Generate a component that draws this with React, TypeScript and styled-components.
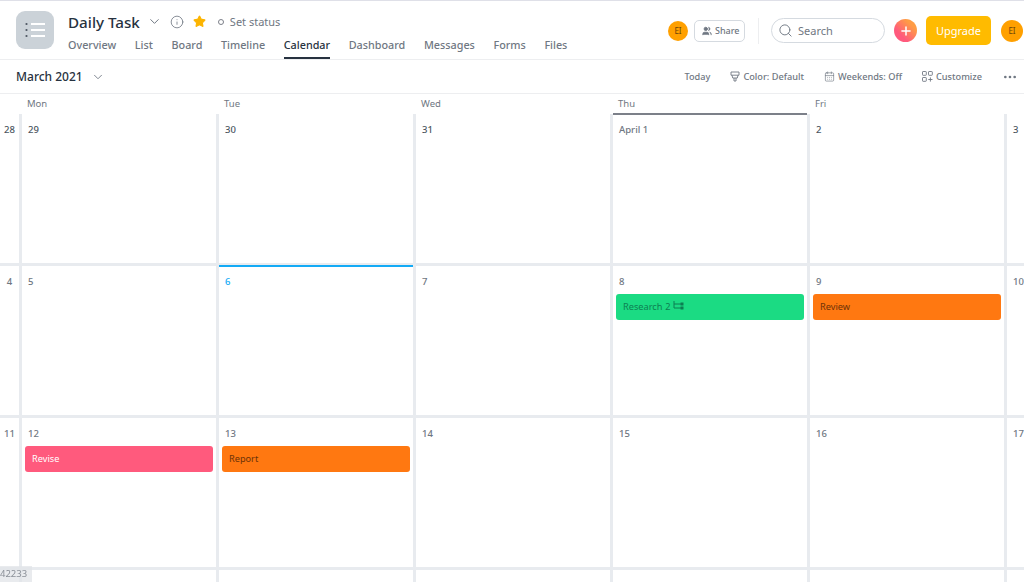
import type { FC } from "react";
import styled, { createGlobalStyle } from "styled-components";
import { CalendarDays, ChevronDown, Info, MoreHorizontal, Plus, Search, Star, Users } from "lucide-react";

type Tone = "green" | "orange" | "pink";

interface CellData {
  label: string;
  isToday?: boolean;
  isMarked?: boolean;
  muted?: boolean;
  task?: { name: string; tone: Tone; subtasks?: number };
}

const tabs = ["Overview", "List", "Board", "Timeline", "Calendar", "Dashboard", "Messages", "Forms", "Files"];
const weekdays = ["Mon", "Tue", "Wed", "Thu", "Fri"];

const weeks: CellData[][] = [
  [
    { label: "28" },
    { label: "29" },
    { label: "30" },
    { label: "31" },
    { label: "April 1", isMarked: true, muted: true },
    { label: "2" },
    { label: "3" },
  ],
  [
    { label: "4", muted: true },
    { label: "5", muted: true },
    { label: "6", isToday: true },
    { label: "7", muted: true },
    { label: "8", muted: true, task: { name: "Research", tone: "green", subtasks: 2 } },
    { label: "9", muted: true, task: { name: "Review", tone: "orange" } },
    { label: "10", muted: true },
  ],
  [
    { label: "11", muted: true },
    { label: "12", muted: true, task: { name: "Revise", tone: "pink" } },
    { label: "13", muted: true, task: { name: "Report", tone: "orange" } },
    { label: "14", muted: true },
    { label: "15", muted: true },
    { label: "16", muted: true },
    { label: "17", muted: true },
  ],
  [
    { label: "18", muted: true },
    { label: "19", muted: true },
    { label: "20", muted: true },
    { label: "21", muted: true },
    { label: "22", muted: true },
    { label: "23", muted: true },
    { label: "24", muted: true },
  ],
];

const toneColors: Record<Tone, { bg: string; fg: string }> = {
  green: { bg: "#1bdb83", fg: "#0d7f52" },
  orange: { bg: "#ff7811", fg: "#6d3208" },
  pink: { bg: "#ff5a7d", fg: "#ffffff" },
};

const App: FC = () => (
  <Page>
    <GlobalStyle />
    <Header>
      <LogoTile>
        <svg width="20" height="16" viewBox="0 0 20 16" fill="none">
          <circle cx="1.5" cy="2" r="1.1" fill="#4c5560" />
          <circle cx="1.5" cy="8" r="1.1" fill="#4c5560" />
          <circle cx="1.5" cy="14" r="1.1" fill="#4c5560" />
          <path d="M6 2h14M6 8h14M6 14h14" stroke="#fff" strokeWidth="2" />
        </svg>
      </LogoTile>
      <TitleBlock>
        <TitleRow>
          <Title>Daily Task</Title>
          <ChevronDown size={15} color="#6f7782" strokeWidth={1.6} />
          <Info size={14} color="#6f7782" strokeWidth={1.4} />
          <Star size={13} color="#fcb400" fill="#fcb400" />
          <StatusDot />
          <StatusText>Set status</StatusText>
        </TitleRow>
        <Tabs>
          {tabs.map((tab) => (
            <Tab key={tab} $active={tab === "Calendar"}>
              {tab}
            </Tab>
          ))}
        </Tabs>
      </TitleBlock>
      <HeaderRight>
        <Avatar $size={20}>EI</Avatar>
        <ShareButton>
          <Users size={10} color="#6f7782" fill="#6f7782" />
          Share
        </ShareButton>
        <VDivider />
        <SearchBox>
          <Search size={15} color="#6f7782" strokeWidth={1.5} />
          <span>Search</span>
        </SearchBox>
        <AddButton>
          <Plus size={14} color="#fff" strokeWidth={2.6} />
        </AddButton>
        <UpgradeButton>Upgrade</UpgradeButton>
        <Avatar $size={22}>EI</Avatar>
      </HeaderRight>
    </Header>

    <Toolbar>
      <MonthLabel>March 2021</MonthLabel>
      <ChevronDown size={14} color="#6f7782" strokeWidth={1.5} />
      <ToolbarRight>
        <ToolItem>Today</ToolItem>
        <ToolItem>
          <svg width="10" height="11" viewBox="0 0 10 11" fill="none" stroke="#6f7782" strokeWidth="0.9">
            <path d="M1 1h8v3.2H1zM2 4.2l.7 2.8h4.6L8 4.2M4 7v3h2V7" />
          </svg>
          Color: Default
        </ToolItem>
        <ToolItem>
          <CalendarDays size={11} color="#6f7782" strokeWidth={1.4} />
          Weekends: Off
        </ToolItem>
        <ToolItem>
          <svg width="11" height="11" viewBox="0 0 11 11" fill="none" stroke="#6f7782" strokeWidth="0.9">
            <rect x="0.5" y="0.5" width="3.8" height="3.8" rx="0.6" />
            <rect x="6.5" y="0.5" width="3.8" height="3.8" rx="0.6" />
            <rect x="0.5" y="6.5" width="3.8" height="3.8" rx="0.6" />
            <path d="M8.4 6.4v4.2M6.3 8.5h4.2" />
          </svg>
          Customize
        </ToolItem>
        <MoreHorizontal size={16} color="#6f7782" />
      </ToolbarRight>
    </Toolbar>

    <WeekdayRow>
      {weekdays.map((day) => (
        <Weekday key={day}>{day}</Weekday>
      ))}
    </WeekdayRow>

    <Grid>
      {weeks.map((week) =>
        week.map((cell) => (
          <Cell key={cell.label}>
            {cell.isMarked && <TopBar $color="#7c8089" />}
            {cell.isToday && <TopBar $color="#14aaf5" />}
            <DateLabel $today={cell.isToday} $muted={cell.muted}>
              {cell.label}
            </DateLabel>
            {cell.task && (
              <TaskCard $tone={cell.task.tone}>
                {cell.task.name}
                {cell.task.subtasks && (
                  <>
                    <span> {cell.task.subtasks}</span>
                    <svg width="11" height="10" viewBox="0 0 11 10" fill="none" stroke="currentColor" strokeWidth="1">
                      <path d="M1 0v7h7M1 3h7" />
                      <rect x="8" y="2" width="2" height="2" fill="currentColor" />
                      <rect x="8" y="6" width="2" height="2" fill="currentColor" />
                    </svg>
                  </>
                )}
              </TaskCard>
            )}
          </Cell>
        ))
      )}
    </Grid>

    <FrameCounter>42233</FrameCounter>
  </Page>
);

export default App;

const GlobalStyle = createGlobalStyle`
  html, body {
    margin: 0;
    height: 100%;
    background: #fff;
    overflow: hidden;
  }
  * {
    box-sizing: border-box;
  }
`;

const Page = styled.div`
  width: 1024px;
  height: 582px;
  overflow: hidden;
  font-family: "Noto Sans", "Open Sans", sans-serif;
  color: #6f7782;
  background: #fff;
  border-top: 1px solid #dfe0e8;
`;

const Header = styled.header`
  display: flex;
  height: 59px;
  padding-left: 16px;
  border-bottom: 1px solid #edeef0;
`;

const LogoTile = styled.div`
  display: flex;
  align-items: center;
  justify-content: center;
  width: 38px;
  height: 38px;
  margin-top: 10px;
  border-radius: 9px;
  background: #cbd2d8;
`;

const TitleBlock = styled.div`
  display: flex;
  flex-direction: column;
  margin-left: 14px;
`;

const TitleRow = styled.div`
  display: flex;
  align-items: center;
  height: 24px;
  margin-top: 9px;

  svg:nth-of-type(1) {
    margin-left: 7px;
  }
  svg:nth-of-type(2) {
    margin-left: 8px;
  }
  svg:nth-of-type(3) {
    margin-left: 9px;
  }
`;

const Title = styled.h1`
  margin: 0;
  font-size: 15.2px;
  font-weight: 500;
  color: #273240;
`;

const StatusDot = styled.span`
  width: 6px;
  height: 6px;
  margin-left: 12px;
  border: 1px solid #7c8089;
  border-radius: 50%;
`;

const StatusText = styled.span`
  margin-left: 6px;
  font-size: 11px;
`;

const Tabs = styled.nav`
  display: flex;
  gap: 18.6px;
  height: 26px;
`;

const Tab = styled.span<{ $active: boolean }>`
  display: flex;
  align-items: center;
  height: 25px;
  padding-bottom: 1px;
  font-size: 10.8px;
  font-weight: 500;
  color: ${({ $active }) => ($active ? "#273240" : "#6f7782")};
  border-bottom: 2px solid ${({ $active }) => ($active ? "#273240" : "transparent")};
`;

const HeaderRight = styled.div`
  display: flex;
  align-items: center;
  margin-left: auto;
  padding-top: 1px;
  padding-right: 1px;
`;

const Avatar = styled.div<{ $size: number }>`
  display: flex;
  align-items: center;
  justify-content: center;
  width: ${({ $size }) => $size}px;
  height: ${({ $size }) => $size}px;
  border-radius: 50%;
  background: #ffa000;
  color: #6d4308;
  font-size: 8px;
`;

const ShareButton = styled.button`
  display: flex;
  align-items: center;
  gap: 3px;
  width: 51px;
  height: 22px;
  margin-left: 6px;
  padding: 0 0 0 7px;
  border: 1px solid #d5dae0;
  border-radius: 5px;
  background: #fff;
  color: #6f7782;
  font: 500 9px "Noto Sans", sans-serif;
`;

const VDivider = styled.div`
  width: 1px;
  height: 26px;
  margin: 0 12px 0 13px;
  background: #edeef0;
`;

const SearchBox = styled.div`
  display: flex;
  align-items: center;
  gap: 5px;
  width: 114px;
  height: 25px;
  padding-left: 6px;
  border: 1px solid #d5dae0;
  border-radius: 13px;
  font-size: 11px;
`;

const AddButton = styled.div`
  display: flex;
  align-items: center;
  justify-content: center;
  width: 23px;
  height: 23px;
  margin-left: 9px;
  border-radius: 50%;
  background: linear-gradient(45deg, #ff5a7d 30%, #ff9c45 75%);
`;

const UpgradeButton = styled.button`
  width: 65px;
  height: 29px;
  margin: 0 10px 0 9px;
  border: 0;
  border-radius: 5px;
  background: #ffbb00;
  color: #fff;
  font: 400 11px "Noto Sans", sans-serif;
`;

const Toolbar = styled.div`
  display: flex;
  align-items: center;
  gap: 8px;
  height: 34px;
  padding: 0 6px 0 16px;
  border-bottom: 1px solid #edeef0;
`;

const MonthLabel = styled.span`
  font-size: 12px;
  font-weight: 500;
  color: #273240;
`;

const ToolbarRight = styled.div`
  display: flex;
  align-items: center;
  gap: 20px;
  margin-left: auto;
`;

const ToolItem = styled.span`
  display: flex;
  align-items: center;
  gap: 3px;
  font-size: 9.2px;
  font-weight: 500;
`;

const WeekdayRow = styled.div`
  display: grid;
  grid-template-columns: 22px repeat(5, 197px);
  height: 20px;

  &::before {
    content: "";
  }
`;

const Weekday = styled.span`
  padding-left: 5px;
  font-size: 9.5px;
  line-height: 19px;
`;

const Grid = styled.div`
  display: grid;
  grid-template-columns: 22px repeat(5, 197px) 17px;
  grid-auto-rows: 152px;
`;

const Cell = styled.div`
  position: relative;
  min-width: 0;
  padding: 9px 3px 0;
  border-right: 3px solid #e8ebef;
  border-bottom: 3px solid #e8ebef;

  &:nth-child(7n + 1) {
    padding: 9px 0 0;
    text-align: center;
  }
  &:nth-child(7n) {
    border-right: 0;
  }
`;

const TopBar = styled.span<{ $color: string }>`
  position: absolute;
  top: -1px;
  left: 0;
  right: 0;
  height: 2px;
  background: ${({ $color }) => $color};
`;

const DateLabel = styled.div<{ $today?: boolean; $muted?: boolean }>`
  height: 14px;
  padding: 0 3px;
  font-size: 9.5px;
  font-weight: 500;
  line-height: 14px;
  color: ${({ $today, $muted }) => ($today ? "#14aaf5" : $muted ? "#6f7782" : "#4b5560")};
`;

const TaskCard = styled.div<{ $tone: Tone }>`
  display: flex;
  align-items: center;
  gap: 3px;
  height: 26px;
  margin-top: 5px;
  padding: 0 0 2px 7px;
  border-radius: 3px;
  font-size: 9.2px;
  background: ${({ $tone }) => toneColors[$tone].bg};
  color: ${({ $tone }) => toneColors[$tone].fg};

  svg {
    margin-left: -1px;
  }
`;

const FrameCounter = styled.div`
  position: fixed;
  left: 0;
  bottom: 0;
  width: 32px;
  height: 16px;
  background: rgba(225, 228, 232, 0.75);
  color: #8b9098;
  font-size: 9.5px;
  line-height: 16px;
`;
